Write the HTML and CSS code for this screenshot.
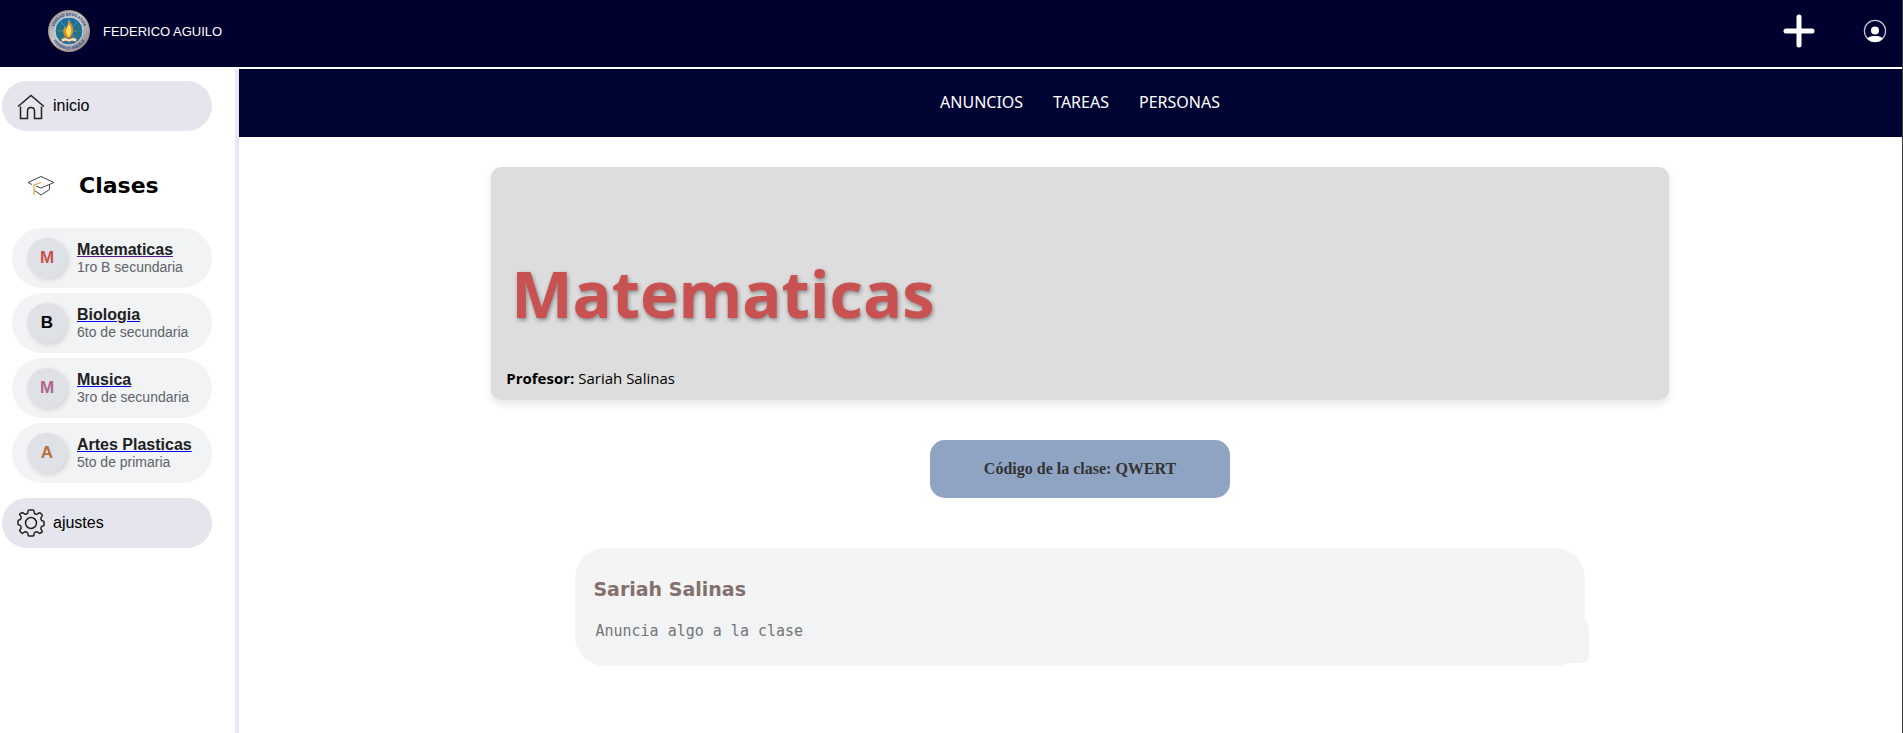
FILE: index.html
```html
<!DOCTYPE html>
<html lang="es">
<head>
<meta charset="utf-8">
<title>Matematicas</title>
<link rel="stylesheet" href="styles.css">
</head>
<body>
<div class="page">
  <header class="topbar">
    <div class="brand">
      <svg class="brand-logo" viewBox="0 0 42 42" aria-hidden="true">
        <defs>
          <linearGradient id="metal" x1="0" y1="0" x2="1" y2="1">
            <stop offset="0" stop-color="#8d959d"/><stop offset=".45" stop-color="#c9ccca"/><stop offset="1" stop-color="#7d7f86"/>
          </linearGradient>
          <path id="arc-top" d="M5.500 21A15.500 15.500 0 0 1 36.500 21"/>
          <path id="arc-bottom" d="M2.500 21A18.500 18.500 0 0 0 39.500 21"/>
        </defs>
        <circle cx="21" cy="21" r="20.500" fill="url(#metal)" stroke="#b08f80"/>
        <circle cx="21" cy="21" r="14" fill="#1c6fa3" stroke="#d5dadb"/>
        <path d="M21 8v26M9 21h24M13 12l16 18M29 12L13 30" stroke="#3f95bd" stroke-width="1"/>
        <path d="M12 15c-3 7 0 13 6 15M30 15c3 7 0 13-6 15" fill="none" stroke="#2d7a54" stroke-width="3" stroke-dasharray="2 1"/>
        <path d="M13 29q4-3 8 0q4-3 8 0l-1 3q-4-2-7 0q-3-2-7 0z" fill="#eee5ca" stroke="#93542e" stroke-width=".7"/>
        <path d="M21 10c3 4 5 8 4 13l-3 5h-3c-4-3-5-7-2-12c1 2 1 3 2 4c1-4 0-7 2-10z" fill="#e48b18"/>
        <path d="M21 14c3 5 3 8 0 13c-4-4-4-7 0-13z" fill="#ffe45a"/>
        <text class="seal-text"><textPath href="#arc-top" startOffset="50%" text-anchor="middle">UNIDAD EDUCATIVA</textPath></text>
        <text class="seal-text"><textPath href="#arc-bottom" startOffset="50%" text-anchor="middle">FEDERICO AGUILO</textPath></text>
      </svg>
      <span class="brand-name">FEDERICO AGUILO</span>
    </div>
    <div class="actions">
      <button class="icon-button" type="button" aria-label="Agregar">
        <svg width="32" height="34" viewBox="0 0 32 34"><path d="M16 3v28M3 17h26" stroke="#fff" stroke-width="5" stroke-linecap="round"/></svg>
      </button>
      <button class="icon-button" type="button" aria-label="Cuenta">
        <svg width="24" height="24" viewBox="0 0 24 24">
          <circle cx="12" cy="12" r="10.600" fill="none" stroke="#c4c4d0" stroke-width="1.200"/>
          <circle cx="12" cy="11.500" r="4" fill="#fff"/>
          <path d="M4 19.500q2-2 5-2.500h6q3 .5 5 2.500q-3.500 3.500-8 3.500t-8-3.500z" fill="#fff"/>
        </svg>
      </button>
    </div>
  </header>

  <div class="layout">
    <aside class="sidebar">
      <button class="pill" type="button">
        <svg width="28" height="28" viewBox="0 0 28 28" fill="none" stroke="#222" stroke-width="1.500">
          <path d="M1 14.500L14 3.500l13 11M3.500 14.500v12h7V19q0-3.500 3.500-3.500t3.500 3.500v7.500h7v-12"/>
        </svg>
        <span>inicio</span>
      </button>

      <div class="section-title">
        <svg width="28" height="22" viewBox="0 0 28 22" fill="none" stroke="#444" stroke-width="1">
          <path d="M1 7.500L14 1.500l13 6l-13 5.500l-5-2"/>
          <path d="M1 7.500l4 2M22.500 10v4.500L14 20l-6.500-4.500"/>
          <path d="M14 7.500L7 10v10" stroke="#e8a552" stroke-width="1.300"/>
        </svg>
        <h2>Clases</h2>
      </div>

      <nav class="classes" aria-label="Clases">
        <div class="class-item">
          <span class="avatar red">M</span>
          <div><a class="class-name visited" href="#">Matematicas</a><div class="class-level">1ro B secundaria</div></div>
        </div>
        <div class="class-item">
          <span class="avatar black">B</span>
          <div><a class="class-name" href="#">Biologia</a><div class="class-level">6to de secundaria</div></div>
        </div>
        <div class="class-item">
          <span class="avatar mauve">M</span>
          <div><a class="class-name" href="#">Musica</a><div class="class-level">3ro de secundaria</div></div>
        </div>
        <div class="class-item">
          <span class="avatar orange">A</span>
          <div><a class="class-name" href="#">Artes Plasticas</a><div class="class-level">5to de primaria</div></div>
        </div>
      </nav>

      <button class="pill" type="button">
        <svg width="28" height="28" viewBox="0 0 28 28" fill="none" stroke="#222" stroke-width="1.500" stroke-linejoin="round">
          <path d="M12 1h4q1 0 1 1.500q0 2 1.500 2.500q1.500.7 3-.8q1-1 1.800-.2l1.700 1.700q.8.800-.2 1.800q-1.500 1.500-.8 3q.6 1.500 2 1.500q1 0 1 1v3q0 1-1 1q-1.500 0-2 1.500q-.7 1.500.8 3q1 1 .2 1.800L23.300 24q-.8.800-1.800-.2q-1.500-1.500-3-.8q-1.500.5-1.500 2.500q0 1.500-1 1.500h-4q-1 0-1-1.500q0-2-1.500-2.500q-1.500-.7-3 .8q-1 1-1.800.2L3 22.300q-.8-.8.200-1.800q1.500-1.500.8-3q-.5-1.500-2-1.500q-1 0-1-1v-3q0-1 1-1q1.500 0 2-1.500q.7-1.500-.8-3q-1-1-.2-1.800L4.700 4q.8-.8 1.800.2q1.500 1.500 3 .8q1.500-.5 1.500-2.500q0-1.500 1-1.500z"/>
          <circle cx="14" cy="14" r="5.500"/>
        </svg>
        <span>ajustes</span>
      </button>
    </aside>

    <main class="content">
      <nav class="tabs" aria-label="Secciones">
        <a href="#">ANUNCIOS</a>
        <a href="#">TAREAS</a>
        <a href="#">PERSONAS</a>
      </nav>

      <section class="banner">
        <h1>Matematicas</h1>
        <p><strong>Profesor:</strong> Sariah Salinas</p>
      </section>

      <div class="code">Código de la clase: QWERT</div>

      <section class="post">
        <h3><label for="announcement">Sariah Salinas</label></h3>
        <textarea id="announcement" placeholder="Anuncia algo a la clase"></textarea>
      </section>
    </main>
  </div>
</div>
</body>
</html>
```
FILE: styles.css
```css
* { box-sizing: border-box; }

body {
  margin: 0;
  background: #fff;
  color: #000;
  font-family: "Liberation Sans", Arial, sans-serif;
  font-size: 16px;
}

h1, h2, h3, p { margin: 0; }

.page {
  display: flex;
  flex-direction: column;
  min-height: 100vh;
  overflow: hidden;
  border-right: 1px solid #3c3c3c;
}

/* Top bar */
.topbar {
  display: flex;
  align-items: center;
  justify-content: space-between;
  height: 67px;
  padding: 0 15px 5px 48px;
  background: #00002e;
}

.brand { display: flex; align-items: center; gap: 13px; }
.brand-logo { width: 42px; height: 42px; }
.brand-name { color: #fff; font-size: 13px; }
.seal-text { font-size: 4px; font-weight: bold; fill: #2b3a78; }

.actions { display: flex; align-items: center; gap: 48px; }

.icon-button {
  display: flex;
  padding: 0;
  border: 0;
  background: none;
  cursor: pointer;
}

/* Columns */
.layout { display: flex; flex: 1; margin-top: 2px; }

.sidebar {
  flex: 0 0 239px;
  padding: 12px 23px 0 2px;
  border-right: 4px solid #e8e8f5;
}

.pill {
  display: flex;
  align-items: center;
  gap: 8px;
  width: 100%;
  height: 50px;
  padding: 0 15px;
  border: 0;
  border-radius: 25px;
  background: #e4e5ed;
  color: #000;
  font: inherit;
  cursor: pointer;
}

.section-title {
  display: flex;
  align-items: center;
  gap: 24px;
  height: 97px;
  padding: 12px 0 0 25px;
}

.section-title h2 { font: bold 22px "DejaVu Sans", Verdana, sans-serif; }

.classes {
  display: flex;
  flex-direction: column;
  gap: 5px;
  margin: 0 0 15px 10px;
}

.class-item {
  display: flex;
  align-items: center;
  gap: 10px;
  height: 60px;
  padding: 0 15px;
  border-radius: 30px;
  background: #f1f3f4;
  white-space: nowrap;
}

.avatar {
  flex: none;
  width: 40px;
  border-radius: 50%;
  background: #dee1e6;
  box-shadow: 2px 2px 5px rgba(0, 0, 0, .12);
  font-size: 17px;
  font-weight: bold;
  line-height: 40px;
  text-align: center;
}

.red { color: #c85151; }
.black { color: #000; }
.mauve { color: #b0658a; }
.orange { color: #b86f3c; }

.class-name {
  color: #202124;
  font-weight: bold;
  line-height: 18px;
  text-decoration: underline #0000ee;
}

.class-name.visited { text-decoration-color: #551a8b; }
.class-level { color: #5f6368; font-size: 14px; line-height: 16px; }

/* Main column runs slightly past the right edge */
.content {
  display: flex;
  flex: 1;
  flex-direction: column;
  align-items: center;
  margin-right: -19px;
}

.tabs {
  display: flex;
  align-items: center;
  align-self: stretch;
  justify-content: center;
  gap: 30px;
  height: 68px;
  padding-bottom: 2px;
  background: #000433;
}

.tabs a {
  color: #fff;
  font-family: "Noto Sans", Tahoma, sans-serif;
  text-decoration: none;
}

.banner {
  width: 70%;
  margin-top: 30px;
  padding: 80px 15px 11px;
  border-radius: 10px;
  background: #ddd;
  box-shadow: 0 4px 8px rgba(0, 0, 0, .1);
  font-family: "Open Sans", "Segoe UI", sans-serif;
}

.banner h1 {
  padding-left: 5px;
  color: #c85151;
  font-size: 65px;
  line-height: 93px;
  text-shadow: 1px 2px 4px rgba(0, 0, 0, .4);
}

.banner p { margin-top: 27px; font-size: 15px; line-height: 22px; }

.code {
  width: 300px;
  margin-top: 40px;
  padding: 20px;
  border-radius: 15px;
  background: #8fa3c3;
  color: #333;
  font: bold 16px/18px "Liberation Serif", "Times New Roman", serif;
  text-align: center;
}

.post {
  width: 60%;
  margin-top: 50px;
  padding: 28px 18px 3px;
  border-radius: 30px;
  background: #f4f4f4;
}

.post h3 {
  color: #857070;
  font: bold 19px/26px "DejaVu Sans", Verdana, sans-serif;
}

.post textarea {
  display: block;
  width: calc(100% + 22px);
  height: 44px;
  margin-top: 17px;
  padding: 3px 2px;
  border: 0;
  border-radius: 8px;
  background: #f1f3f4;
  font: 15px "DejaVu Sans Mono", Consolas, monospace;
  resize: none;
}

.post textarea::placeholder { color: #757575; }
```
